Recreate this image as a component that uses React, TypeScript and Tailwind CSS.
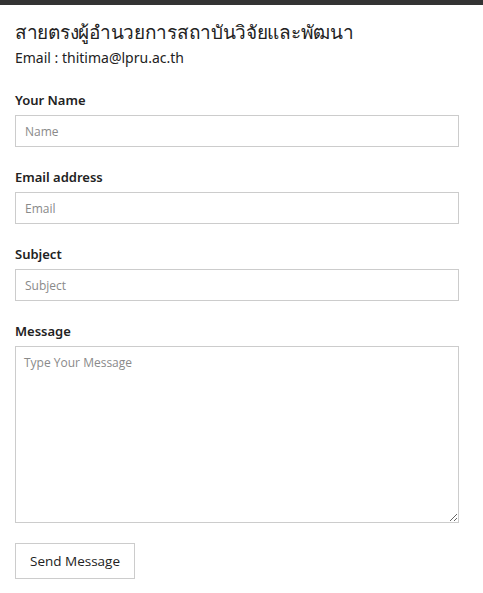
import React, { useState } from 'react';

const inputCls =
  "block w-full h-[32px] px-[9px] border border-[#cccccc] bg-white text-[12px] text-[#333] placeholder:text-[#8a8a8a] outline-none font-['Open_Sans',sans-serif]";

const labelCls = "block text-[13px] font-semibold text-[#222] leading-[16px] mb-[7px] font-['Noto_Sans',sans-serif]";

const App: React.FC = () => {
  const [name, setName] = useState('');
  const [email, setEmail] = useState('');
  const [subject, setSubject] = useState('');
  const [message, setMessage] = useState('');

  return (
    <div className="min-h-[593px] bg-white font-['Noto_Sans',sans-serif]">
      <div className="h-[5px] bg-[#333333]" />
      <div className="px-[15px] pt-[15px] w-[474px]">
        <h1 className="text-[19px] leading-[24px] tracking-[-0.3px] text-[#222] font-normal">
          สายตรงผู้อำนวยการสถาบันวิจัยและพัฒนา
        </h1>
        <p className="text-[14px] leading-[18px] text-[#222] mt-[5px]">Email : thitima@lpru.ac.th</p>

        <form className="mt-[25px]" onSubmit={(e) => e.preventDefault()}>
          <div className="mb-[22px]">
            <label htmlFor="name" className={labelCls}>Your Name</label>
            <input id="name" value={name} onChange={(e) => setName(e.target.value)} placeholder="Name" className={inputCls} />
          </div>
          <div className="mb-[22px]">
            <label htmlFor="email" className={labelCls}>Email address</label>
            <input id="email" type="email" value={email} onChange={(e) => setEmail(e.target.value)} placeholder="Email" className={inputCls} />
          </div>
          <div className="mb-[22px]">
            <label htmlFor="subject" className={labelCls}>Subject</label>
            <input id="subject" value={subject} onChange={(e) => setSubject(e.target.value)} placeholder="Subject" className={inputCls} />
          </div>
          <div className="mb-[20px]">
            <label htmlFor="message" className={labelCls}>Message</label>
            <textarea
              id="message"
              value={message}
              onChange={(e) => setMessage(e.target.value)}
              placeholder="Type Your Message"
              className="block w-full h-[177px] px-[8px] py-[7px] border border-[#cccccc] bg-white text-[12px] text-[#333] placeholder:text-[#8a8a8a] outline-none font-['Open_Sans',sans-serif]"
            />
          </div>
          <button
            type="submit"
            className="w-[120px] h-[36px] border border-[#cccccc] bg-white text-[13.5px] text-[#222] font-['Open_Sans',sans-serif]"
          >
            Send Message
          </button>
        </form>
      </div>
    </div>
  );
};

export default App;
